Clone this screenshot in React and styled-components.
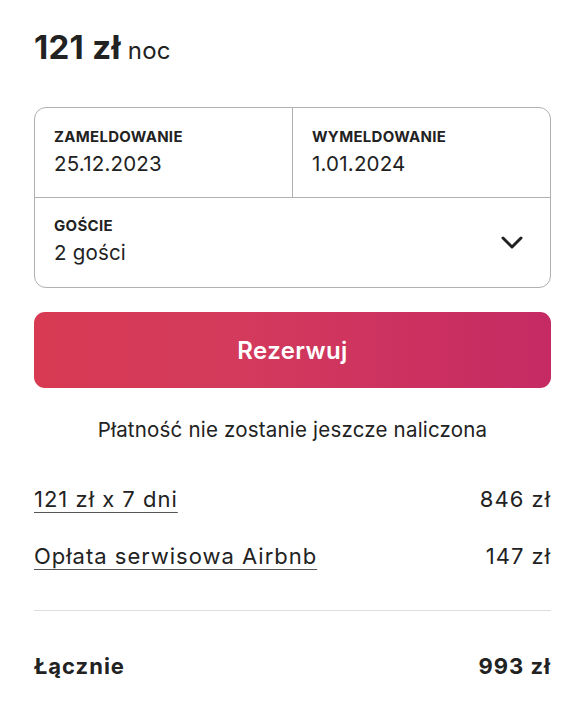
import React from "react";
import styled, { createGlobalStyle } from "styled-components";

const GlobalStyle = createGlobalStyle`
  * { box-sizing: border-box; margin: 0; padding: 0; }
  body {
    margin: 0;
    background: #fff;
    font-family: Inter, "Noto Sans", sans-serif;
    color: #222;
  }
`;

const Card = styled.div`
  width: 584px;
  padding: 27px 33px 0 34px;
  display: flex;
  flex-direction: column;
`;

const PriceLine = styled.div`
  display: flex;
  align-items: baseline;
  gap: 7px;
  height: 45px;
`;

const Price = styled.span`
  font-size: 33px;
  font-weight: 700;
  letter-spacing: 0.3px;
  color: #222;
`;

const Per = styled.span`
  font-size: 24px;
  font-weight: 400;
  letter-spacing: 0.3px;
  color: #222;
`;

const Picker = styled.div`
  margin-top: 35px;
  border: 1px solid #b0b0b0;
  border-radius: 12px;
  display: flex;
  flex-direction: column;
`;

const DatesRow = styled.div`
  display: grid;
  grid-template-columns: 257px 1fr;
  border-bottom: 1px solid #b0b0b0;
  height: 90px;
`;

const Field = styled.div`
  display: flex;
  flex-direction: column;
  padding: 20px 19px 0;
  border-left: ${(p) => (p.$divider ? "1px solid #b0b0b0" : "none")};
`;

const Label = styled.div`
  font-size: 15px;
  font-weight: 700;
  letter-spacing: 0.3px;
  color: #222;
  line-height: 18px;
`;

const Value = styled.div`
  font-size: 20.5px;
  font-weight: 400;
  letter-spacing: 0.2px;
  color: #222;
  line-height: 26px;
  margin-top: 5px;
`;

const GuestsRow = styled.div`
  display: flex;
  align-items: center;
  justify-content: space-between;
  height: 89px;
  padding-right: 27px;
`;

const GuestField = styled(Field)`
  padding-top: 19px;
  align-self: stretch;
`;

const Chevron = () => (
  <svg width="22" height="13" viewBox="0 0 22 13" fill="none">
    <path d="M2 2l9 9 9-9" stroke="#222" strokeWidth="3" strokeLinecap="round" strokeLinejoin="round" />
  </svg>
);

const ReserveBtn = styled.button`
  margin-top: 24px;
  height: 76px;
  width: 100%;
  border: none;
  border-radius: 11px;
  background: linear-gradient(to right, #d83a53 0%, #d33a5c 40%, #c52a63 100%);
  color: #fff;
  font-family: Inter, "Noto Sans", sans-serif;
  font-size: 24px;
  font-weight: 600;
  letter-spacing: 0.4px;
  cursor: pointer;
`;

const Note = styled.p`
  margin-top: 29px;
  text-align: center;
  font-size: 20.5px;
  letter-spacing: 0.2px;
  color: #222;
  line-height: 26px;
`;

const Lines = styled.div`
  margin-top: 43px;
  display: flex;
  flex-direction: column;
  gap: 31px;
`;

const LineRow = styled.div`
  display: flex;
  justify-content: space-between;
  align-items: center;
  font-size: 22px;
  letter-spacing: 1px;
  line-height: 26px;
  color: #222;
`;

const LineLabel = styled.span`
  text-decoration: underline;
  text-decoration-color: #555;
  text-underline-offset: 5px;
  text-decoration-thickness: 1px;
`;

const Divider = styled.hr`
  border: none;
  border-top: 1px solid #dddddd;
  margin-top: 41px;
`;

const TotalRow = styled(LineRow)`
  margin-top: 42px;
  font-weight: 700;
`;

export default function App() {
  return (
    <>
      <GlobalStyle />
      <Card>
        <PriceLine>
          <Price>121 zł</Price>
          <Per>noc</Per>
        </PriceLine>
        <Picker>
          <DatesRow>
            <Field>
              <Label>ZAMELDOWANIE</Label>
              <Value>25.12.2023</Value>
            </Field>
            <Field $divider>
              <Label>WYMELDOWANIE</Label>
              <Value>1.01.2024</Value>
            </Field>
          </DatesRow>
          <GuestsRow>
            <GuestField>
              <Label>GOŚCIE</Label>
              <Value>2 gości</Value>
            </GuestField>
            <Chevron />
          </GuestsRow>
        </Picker>
        <ReserveBtn>Rezerwuj</ReserveBtn>
        <Note>Płatność nie zostanie jeszcze naliczona</Note>
        <Lines>
          <LineRow>
            <LineLabel>121 zł x 7 dni</LineLabel>
            <span>846 zł</span>
          </LineRow>
          <LineRow>
            <LineLabel>Opłata serwisowa Airbnb</LineLabel>
            <span>147 zł</span>
          </LineRow>
        </Lines>
        <Divider />
        <TotalRow>
          <span>Łącznie</span>
          <span>993 zł</span>
        </TotalRow>
      </Card>
    </>
  );
}
